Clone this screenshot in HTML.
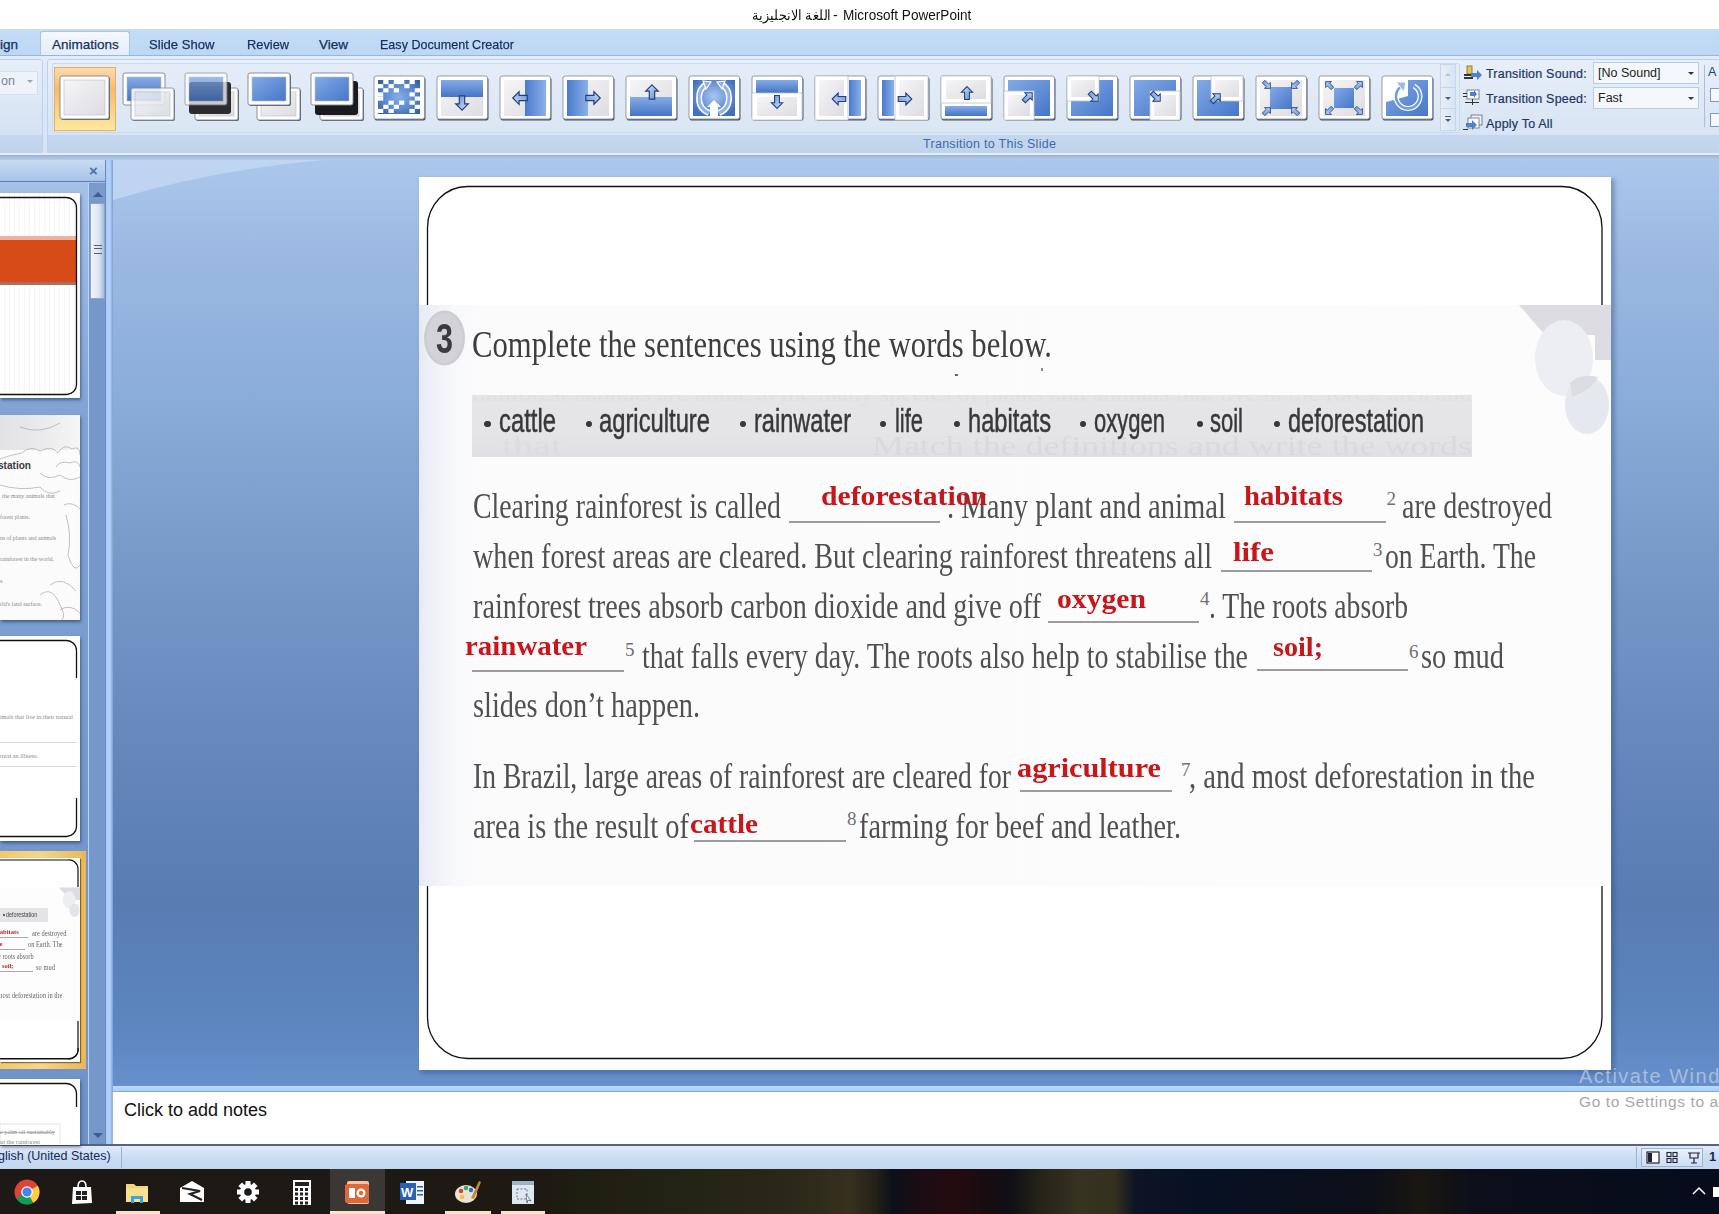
<!DOCTYPE html><html><head><meta charset="utf-8"><style>
html,body{margin:0;padding:0;width:1719px;height:1214px;overflow:hidden;position:relative;background:#fff;font-family:"Liberation Sans",sans-serif}
.a{position:absolute}
.t{position:absolute;white-space:pre;line-height:normal;transform-origin:0 0}
.tab{position:absolute;top:36.5px;font-size:13.5px;color:#15305e;white-space:pre;-webkit-text-stroke:0.25px #15305e}
</style></head><body>

<!-- title bar -->
<div class="a" style="left:0;top:0;width:1719px;height:29px;background:#fff"></div>
<div class="a" style="left:752px;top:7px;font-size:14px;color:#111;white-space:pre;transform:scaleX(0.92);transform-origin:0 0">اللغة الانجليزية</div><div class="a" style="left:833px;top:7px;font-size:14px;color:#111;white-space:pre">-</div><div class="a" style="left:843px;top:7px;font-size:14px;color:#111;white-space:pre;transform:scaleX(0.97);transform-origin:0 0">Microsoft PowerPoint</div>
<!-- tab strip -->
<div class="a" style="left:0;top:29px;width:1719px;height:27px;background:linear-gradient(#c4dcf7,#bcd6f4)"></div>
<div class="a" style="left:40px;top:31px;width:88px;height:25px;background:linear-gradient(#f5f8fd,#e3ecf8);border:1px solid #a9c5e9;border-bottom:none;border-radius:3px 3px 0 0"></div>
<div class="a" style="left:41px;top:55px;width:88px;height:2px;background:#e4edf8"></div>
<div class="tab" style="left:0">ign</div>
<div class="tab" style="left:52px">Animations</div>
<div class="tab" style="left:149px;transform:scaleX(0.97);transform-origin:0 0">Slide Show</div>
<div class="tab" style="left:247px;transform:scaleX(0.95);transform-origin:0 0">Review</div>
<div class="tab" style="left:319px">View</div>
<div class="tab" style="left:380px;transform:scaleX(0.93);transform-origin:0 0">Easy Document Creator</div>
<!-- ribbon body -->
<div class="a" style="left:0;top:55px;width:1719px;height:1px;background:#94b6e4"></div>
<div class="a" style="left:0;top:56px;width:1719px;height:100px;background:linear-gradient(#e2ebf7,#d6e3f4)"></div>
<div class="a" style="left:-6px;top:59px;width:47px;height:93px;border:1px solid #bcd2ec;border-radius:3px;background:linear-gradient(#e6eef9 0%,#d5e2f3 80%,#c4d7ee 81%,#bfd3ec 100%)"></div>
<div class="a" style="left:0;top:71px;width:37px;height:22px;background:#eef3fa;border:1px solid #d3e0f0;border-left:none"></div>
<div class="a" style="left:1px;top:74px;font-size:12.5px;color:#7a8494">on</div>
<div class="a" style="left:27px;top:80px;width:0;height:0;border-left:3px solid transparent;border-right:3px solid transparent;border-top:3px solid #9aa6b6"></div>
<div class="a" style="left:47px;top:59px;width:1680px;height:93px;border:1px solid #bcd2ec;border-radius:3px;background:linear-gradient(#e7eff9 0%,#d8e4f4 80%,#c4d7ee 81%,#bfd3ec 100%)"></div>
<div class="a" style="left:52px;top:63px;width:1406px;height:68px;border:1px solid #c9dbf0;border-radius:2px;background:linear-gradient(#e4edf8,#dbe6f4)"></div>
<div class="a" style="left:923px;top:137px;font-size:12.5px;color:#3e6aa8;white-space:pre;letter-spacing:0.28px">Transition to This Slide</div>
<div class="a" style="left:0;top:153px;width:1719px;height:2px;background:#e4eefa"></div><div class="a" style="left:0;top:155px;width:1719px;height:5px;background:linear-gradient(#97b3d8,#b6cce9)"></div>
<!-- workspace -->
<div class="a" style="left:0;top:160px;width:1719px;height:926px;background:linear-gradient(180deg,#abc7eb 0%,#9bb9e2 10%,#8badd9 25%,#7598c8 45%,#6486bb 65%,#587db3 80%,#5c84bd 92%,#6690cc 100%)"></div>
<svg class="a" style="left:113px;top:160px" width="400" height="60"><path d="M0,0 L210,0 Q100,10 0,40 Z" fill="#c6daf3" opacity="0.75"/></svg>
<!-- left pane -->
<div class="a" style="left:0;top:160px;width:106px;height:984px;background:linear-gradient(180deg,#a9c4ea 0%,#82a4d5 25%,#7397cc 70%,#6e93ca 100%)"></div>
<div class="a" style="left:0;top:160px;width:105px;height:21px;background:linear-gradient(#cadcf3,#a8c2e7);border-bottom:1px solid #5f83b9"></div>
<div class="a" style="left:89px;top:162px;font-size:15px;font-weight:bold;color:#4a6fa5">×</div>
<div class="a" style="left:105px;top:160px;width:8px;height:986px;background:linear-gradient(90deg,#6a8cc0 0px,#6a8cc0 1px,#a9cbf4 1px,#b4d2f6 5px,#8db0e0 7px,#7d9fd3 8px)"></div>
<!-- scrollbar -->
<div class="a" style="left:88px;top:183px;width:1px;height:961px;background:#b9d5f6"></div><div class="a" style="left:89px;top:183px;width:16px;height:961px;background:#7597c9"></div>
<div class="a" style="left:90px;top:184px;width:15px;height:17px;background:#7b99c9"></div>
<div class="a" style="left:93px;top:192px;width:0;height:0;border-left:5px solid transparent;border-right:5px solid transparent;border-bottom:5px solid #3b5f95"></div>
<div class="a" style="left:90px;top:203px;width:15px;height:96px;background:linear-gradient(90deg,#f1f5fb,#dbe5f2 60%,#a9bcd8);border:1px solid #8aa4cc;box-sizing:border-box"></div>
<div class="a" style="left:94px;top:245px;width:8px;height:7px;border-top:1px solid #555e6e;border-bottom:1px solid #555e6e"></div>
<div class="a" style="left:94px;top:248px;width:8px;height:1px;background:#555e6e"></div>
<div class="a" style="left:93px;top:1133px;width:0;height:0;border-left:5px solid transparent;border-right:5px solid transparent;border-top:5px solid #3b5f95"></div>
<!-- notes -->
<div class="a" style="left:113px;top:1086px;width:1606px;height:6px;background:linear-gradient(#bcdcfc,#a9cbf2)"></div><div class="a" style="left:113px;top:1091px;width:1606px;height:1px;background:#86a8d6"></div>
<div class="a" style="left:112px;top:1092px;width:1607px;height:52px;background:#fff;border-left:1px solid #9ab6dc"></div>
<div class="a" style="left:124px;top:1100px;font-size:18px;color:#111;white-space:pre">Click to add notes</div>
<div class="a" style="left:0;top:1144px;width:1719px;height:2px;background:#56657c"></div>
<!-- status bar -->
<div class="a" style="left:0;top:1146px;width:1719px;height:23px;background:linear-gradient(#e0ebf9,#cadcf2 50%,#c3d7f0)"></div>
<div class="a" style="left:121px;top:1147px;width:1px;height:21px;background:#99b3d6"></div>
<div class="a" style="left:-2px;top:1149px;font-size:12.5px;color:#15295a;white-space:pre">glish (United States)</div>
<!-- taskbar -->
<div class="a" style="left:0;top:1169px;width:1719px;height:45px;background:linear-gradient(90deg,#1c1916 0.00%,#1e1913 31.41%,#1e1d11 33.16%,#242415 40.72%,#2a2818 45.96%,#36301e 49.45%,#232119 50.96%,#0c1018 51.89%,#1b0c14 53.52%,#240c10 55.26%,#180c10 57.30%,#101016 58.76%,#242318 60.50%,#383321 62.83%,#34301e 64.86%,#0e1424 66.03%,#081024 69.81%,#0c0f18 79.70%,#1a1711 82.61%,#0c0f1a 85.51%,#060c1c 100.00%)"></div>
<div class="a" style="left:330px;top:1169px;width:55px;height:45px;background:#3a3734"></div>
<div class="a" style="left:116px;top:1211px;width:44px;height:3px;background:#f2e9c4"></div>
<div class="a" style="left:330px;top:1211px;width:55px;height:3px;background:#f2e9c4"></div>
<div class="a" style="left:445px;top:1211px;width:46px;height:3px;background:#f2e9c4"></div>
<div class="a" style="left:501px;top:1211px;width:44px;height:3px;background:#f2e9c4"></div>
<div class="a" style="left:421px;top:179px;width:1194px;height:895px;background:rgba(40,70,120,0.35);filter:blur(2px)"></div><div class="a" style="left:419px;top:177px;width:1192px;height:893px;background:#fff"></div><svg class="a" style="left:419px;top:177px" width="1192" height="893"><rect x="8.5" y="9.5" width="1174.5" height="872" rx="40" ry="41" fill="none" stroke="#111" stroke-width="1.3"/></svg><div class="a" style="left:419px;top:305px;width:1192px;height:581px;background:linear-gradient(90deg,#e6eaf5 0px,#eef0f8 12px,#f7f8fb 35px,#fbfbfc 60px,#fcfcfc 100%)"></div><svg class="a" style="left:1500px;top:305px" width="111" height="140"><polygon points="19,0 111,0 111,55 95,55 95,30 45,30" fill="#dcdce2"/><ellipse cx="64" cy="53" rx="29" ry="38" fill="#eceef4"/><ellipse cx="87" cy="100" rx="22" ry="29" fill="#e6e8ef"/><path d="M70,78 Q80,68 98,72 Q92,85 72,92 Z" fill="#dcdde3"/></svg><svg class="a" style="left:422px;top:308px" width="46" height="60"><ellipse cx="22.5" cy="30" rx="20.5" ry="27.5" fill="#cdcdd1"/><ellipse cx="22.5" cy="30" rx="18" ry="25" fill="#d3d3d7"/></svg><div class="t" style="left:436.0px;top:314.99px;font-size:42px;font-family:'Liberation Sans', sans-serif;font-weight:bold;color:#3b3a40;transform:scaleX(0.7278);">3</div><div class="t" style="left:472.0px;top:322.53px;font-size:37px;font-family:'Liberation Serif', serif;color:#3e3e40;transform:scaleX(0.8292);">Complete the sentences using the words below.</div><div class="a" style="left:472px;top:395px;width:1000px;height:62px;background:#e5e5e8"></div><div class="a" style="left:472px;top:433px;width:1000px;height:24px;background:linear-gradient(#e5e5e8,#e0e0e4)"></div><div class="a" style="left:472px;top:395px;width:1000px;height:62px;overflow:hidden;filter:blur(0.7px)"><div class="t" style="left:0.0px;top:-15.38px;font-size:24px;font-family:'Liberation Serif', serif;color:#e0e0e3;transform:scaleX(1.0374);">rainforest habitats are home to the many species of plants and animals that live in the forest area and</div><div class="t" style="left:400.0px;top:35.05px;font-size:28px;font-family:'Liberation Serif', serif;color:#dadadd;transform:scaleX(1.2818);">Match the definitions and write the words</div><div class="t" style="left:30.0px;top:35.05px;font-size:28px;font-family:'Liberation Serif', serif;color:#dddde0;transform:scaleX(1.4291);">that</div></div><div class="a" style="left:955px;top:374px;width:3px;height:2px;background:#666"></div><div class="a" style="left:1041px;top:368px;width:2px;height:3px;background:#888"></div><div class="a" style="left:484.3px;top:420.5px;width:6.4px;height:6.4px;border-radius:50%;background:#38383c"></div><div class="a" style="left:585.8px;top:420.5px;width:6.4px;height:6.4px;border-radius:50%;background:#38383c"></div><div class="a" style="left:739.8px;top:420.5px;width:6.4px;height:6.4px;border-radius:50%;background:#38383c"></div><div class="a" style="left:879.8px;top:420.5px;width:6.4px;height:6.4px;border-radius:50%;background:#38383c"></div><div class="a" style="left:953.8px;top:420.5px;width:6.4px;height:6.4px;border-radius:50%;background:#38383c"></div><div class="a" style="left:1079.8px;top:420.5px;width:6.4px;height:6.4px;border-radius:50%;background:#38383c"></div><div class="a" style="left:1196.8px;top:420.5px;width:6.4px;height:6.4px;border-radius:50%;background:#38383c"></div><div class="a" style="left:1273.8px;top:420.5px;width:6.4px;height:6.4px;border-radius:50%;background:#38383c"></div><div class="t" style="left:499.0px;top:402.13px;font-size:33px;font-family:'Liberation Sans', sans-serif;color:#38383c;transform:scaleX(0.7225);-webkit-text-stroke:0.5px #38383c;">cattle</div><div class="t" style="left:599.0px;top:402.13px;font-size:33px;font-family:'Liberation Sans', sans-serif;color:#38383c;transform:scaleX(0.7203);-webkit-text-stroke:0.5px #38383c;">agriculture</div><div class="t" style="left:754.0px;top:402.13px;font-size:33px;font-family:'Liberation Sans', sans-serif;color:#38383c;transform:scaleX(0.7146);-webkit-text-stroke:0.5px #38383c;">rainwater</div><div class="t" style="left:895.0px;top:402.13px;font-size:33px;font-family:'Liberation Sans', sans-serif;color:#38383c;transform:scaleX(0.6637);-webkit-text-stroke:0.5px #38383c;">life</div><div class="t" style="left:968.0px;top:402.13px;font-size:33px;font-family:'Liberation Sans', sans-serif;color:#38383c;transform:scaleX(0.7179);-webkit-text-stroke:0.5px #38383c;">habitats</div><div class="t" style="left:1094.0px;top:402.13px;font-size:33px;font-family:'Liberation Sans', sans-serif;color:#38383c;transform:scaleX(0.6671);-webkit-text-stroke:0.5px #38383c;">oxygen</div><div class="t" style="left:1210.0px;top:402.13px;font-size:33px;font-family:'Liberation Sans', sans-serif;color:#38383c;transform:scaleX(0.6665);-webkit-text-stroke:0.5px #38383c;">soil</div><div class="t" style="left:1288.0px;top:402.13px;font-size:33px;font-family:'Liberation Sans', sans-serif;color:#38383c;transform:scaleX(0.7126);-webkit-text-stroke:0.5px #38383c;">deforestation</div><div class="t" style="left:473.0px;top:484.92px;font-size:36px;font-family:'Liberation Serif', serif;color:#505052;transform:scaleX(0.7722);">Clearing rainforest is called</div><div class="t" style="left:947.0px;top:484.92px;font-size:36px;font-family:'Liberation Serif', serif;color:#505052;transform:scaleX(0.7950);">. Many plant and animal</div><div class="t" style="left:1402.0px;top:484.92px;font-size:36px;font-family:'Liberation Serif', serif;color:#505052;transform:scaleX(0.7775);">are destroyed</div><div class="t" style="left:473.0px;top:534.92px;font-size:36px;font-family:'Liberation Serif', serif;color:#505052;transform:scaleX(0.7832);">when forest areas are cleared. But clearing rainforest threatens all</div><div class="t" style="left:1385.0px;top:534.92px;font-size:36px;font-family:'Liberation Serif', serif;color:#505052;transform:scaleX(0.7694);">on Earth. The</div><div class="t" style="left:473.0px;top:584.92px;font-size:36px;font-family:'Liberation Serif', serif;color:#505052;transform:scaleX(0.7823);">rainforest trees absorb carbon dioxide and give off</div><div class="t" style="left:1209.0px;top:584.92px;font-size:36px;font-family:'Liberation Serif', serif;color:#505052;transform:scaleX(0.7675);">. The roots absorb</div><div class="t" style="left:642.0px;top:634.92px;font-size:36px;font-family:'Liberation Serif', serif;color:#505052;transform:scaleX(0.7751);">that falls every day. The roots also help to stabilise the</div><div class="t" style="left:1421.0px;top:634.92px;font-size:36px;font-family:'Liberation Serif', serif;color:#505052;transform:scaleX(0.7904);">so mud</div><div class="t" style="left:473.0px;top:683.92px;font-size:36px;font-family:'Liberation Serif', serif;color:#505052;transform:scaleX(0.7873);">slides don’t happen.</div><div class="t" style="left:473.0px;top:754.92px;font-size:36px;font-family:'Liberation Serif', serif;color:#505052;transform:scaleX(0.7664);">In Brazil, large areas of rainforest are cleared for</div><div class="t" style="left:1189.0px;top:754.92px;font-size:36px;font-family:'Liberation Serif', serif;color:#505052;transform:scaleX(0.7937);">, and most deforestation in the</div><div class="t" style="left:473.0px;top:804.92px;font-size:36px;font-family:'Liberation Serif', serif;color:#505052;transform:scaleX(0.7886);">area is the result of</div><div class="t" style="left:859.0px;top:804.92px;font-size:36px;font-family:'Liberation Serif', serif;color:#505052;transform:scaleX(0.7838);">farming for beef and leather.</div><div class="a" style="left:789px;top:521px;width:151px;height:1.6px;background:#9c9c9e"></div><div class="a" style="left:1234px;top:521px;width:152px;height:1.6px;background:#9c9c9e"></div><div class="a" style="left:1221px;top:570px;width:151px;height:1.6px;background:#9c9c9e"></div><div class="a" style="left:1048px;top:621px;width:151px;height:1.6px;background:#9c9c9e"></div><div class="a" style="left:472px;top:670px;width:152px;height:1.6px;background:#9c9c9e"></div><div class="a" style="left:1257px;top:669px;width:151px;height:1.6px;background:#9c9c9e"></div><div class="a" style="left:1020px;top:790px;width:152px;height:1.6px;background:#9c9c9e"></div><div class="a" style="left:694px;top:840px;width:152px;height:1.6px;background:#9c9c9e"></div><div class="t" style="left:1386.5px;top:488.07px;font-size:19px;font-family:'Liberation Serif', serif;color:#707070;transform:scaleX(1.0000);">2</div><div class="t" style="left:1373.0px;top:538.57px;font-size:19px;font-family:'Liberation Serif', serif;color:#707070;transform:scaleX(1.0000);">3</div><div class="t" style="left:1200.0px;top:588.07px;font-size:19px;font-family:'Liberation Serif', serif;color:#707070;transform:scaleX(1.0000);">4</div><div class="t" style="left:625.0px;top:638.57px;font-size:19px;font-family:'Liberation Serif', serif;color:#707070;transform:scaleX(1.0000);">5</div><div class="t" style="left:1409.0px;top:641.07px;font-size:19px;font-family:'Liberation Serif', serif;color:#707070;transform:scaleX(1.0000);">6</div><div class="t" style="left:1181.0px;top:759.07px;font-size:19px;font-family:'Liberation Serif', serif;color:#707070;transform:scaleX(1.0000);">7</div><div class="t" style="left:847.0px;top:807.57px;font-size:19px;font-family:'Liberation Serif', serif;color:#707070;transform:scaleX(1.0000);">8</div><div class="t" style="left:821.0px;top:480.05px;font-size:28px;font-family:'Liberation Serif', serif;font-weight:bold;color:#c8161a;transform:scaleX(1.0602);">deforestation</div><div class="t" style="left:1244.0px;top:480.05px;font-size:28px;font-family:'Liberation Serif', serif;font-weight:bold;color:#c8161a;transform:scaleX(1.0261);">habitats</div><div class="t" style="left:1233.0px;top:535.55px;font-size:28px;font-family:'Liberation Serif', serif;font-weight:bold;color:#c8161a;transform:scaleX(1.0988);">life</div><div class="t" style="left:1057.0px;top:582.55px;font-size:28px;font-family:'Liberation Serif', serif;font-weight:bold;color:#c8161a;transform:scaleX(1.0595);">oxygen</div><div class="t" style="left:465.0px;top:630.05px;font-size:28px;font-family:'Liberation Serif', serif;font-weight:bold;color:#c8161a;transform:scaleX(1.0324);">rainwater</div><div class="t" style="left:1273.0px;top:631.05px;font-size:28px;font-family:'Liberation Serif', serif;font-weight:bold;color:#c8161a;transform:scaleX(1.0044);">soil;</div><div class="t" style="left:1017.0px;top:751.55px;font-size:28px;font-family:'Liberation Serif', serif;font-weight:bold;color:#c8161a;transform:scaleX(1.0808);">agriculture</div><div class="t" style="left:690.0px;top:807.85px;font-size:28px;font-family:'Liberation Serif', serif;font-weight:bold;color:#c8161a;transform:scaleX(1.0416);">cattle</div><div class="a" style="left:1579px;top:1065px;font-size:20px;color:rgba(200,210,225,0.7);white-space:pre;letter-spacing:1.5px">Activate Windows</div><div class="a" style="left:1579px;top:1093px;font-size:15.5px;color:#a8a8a8;white-space:pre;letter-spacing:0.6px">Go to Settings to activate Windows.</div><svg width="0" height="0" style="position:absolute"><defs>
<linearGradient id="bl" x1="0" y1="0" x2="1" y2="1"><stop offset="0" stop-color="#82aae6"/><stop offset="1" stop-color="#4676c8"/></linearGradient>
<linearGradient id="blv" x1="0" y1="0" x2="0" y2="1"><stop offset="0" stop-color="#86ace6"/><stop offset="1" stop-color="#4474c6"/></linearGradient>
<linearGradient id="blh" x1="0" y1="0" x2="1" y2="0"><stop offset="0" stop-color="#4a7acb"/><stop offset="1" stop-color="#8ab0e8"/></linearGradient>
<linearGradient id="gr" x1="0" y1="0" x2="1" y2="1"><stop offset="0" stop-color="#f6f6f8"/><stop offset="1" stop-color="#dcdce2"/></linearGradient>
<radialGradient id="blr" cx="0.5" cy="0.45" r="0.6"><stop offset="0" stop-color="#a9c6f0"/><stop offset="1" stop-color="#4170c2"/></radialGradient>
<linearGradient id="arr" x1="0" y1="0" x2="1" y2="1"><stop offset="0" stop-color="#d3e3fa"/><stop offset="1" stop-color="#5f8cd8"/></linearGradient>
<linearGradient id="hl" x1="0" y1="0" x2="0" y2="1"><stop offset="0" stop-color="#fcdcae"/><stop offset="0.35" stop-color="#f9b970"/><stop offset="0.55" stop-color="#fbc978"/><stop offset="1" stop-color="#fde9a0"/></linearGradient>
<radialGradient id="blr2" cx="0.5" cy="0.5" r="0.65"><stop offset="0" stop-color="#86aee8"/><stop offset="0.6" stop-color="#5a86cc"/><stop offset="1" stop-color="#35609e"/></radialGradient><linearGradient id="dk" x1="0" y1="0" x2="0" y2="1"><stop offset="0" stop-color="#5a7bb0"/><stop offset="1" stop-color="#3a3a3e"/></linearGradient>
</defs></svg><svg class="a" style="left:54px;top:67px" width="62" height="64"><rect x="0.5" y="0.5" width="61" height="63" fill="url(#hl)" stroke="#e8b060" stroke-width="1"/></svg><svg class="a" style="left:59px;top:75px;overflow:visible" width="54" height="48"><rect x="2" y="2" width="49" height="43" rx="2" fill="#56606e"/><rect x="1" y="1" width="49" height="43" rx="2" fill="#fff" stroke="#7d8592" stroke-width="0.9"/><rect x="5" y="5" width="41" height="35" fill="url(#gr)" stroke="#b8bcc4" stroke-width="0.6"/></svg><svg class="a" style="left:122px;top:75px;overflow:visible" width="54" height="48"><rect x="1" y="-2" width="42" height="32" rx="2" fill="#fff" stroke="#7d8592" stroke-width="0.9"/><rect x="5" y="2" width="34" height="24" fill="url(#blv)" stroke="#b8bcc4" stroke-width="0.6"/><g opacity="0.85"><rect x="10" y="14" width="43" height="32" rx="2" fill="#56606e"/><rect x="9" y="13" width="43" height="32" rx="2" fill="#fff" stroke="#7d8592" stroke-width="0.9"/><rect x="13" y="17" width="35" height="24" fill="url(#gr)" stroke="#b8bcc4" stroke-width="0.6"/></g></svg><svg class="a" style="left:185px;top:75px;overflow:visible" width="54" height="48"><rect x="11" y="14" width="43" height="32" rx="2" fill="#56606e"/><rect x="10" y="13" width="43" height="32" rx="2" fill="#fff" stroke="#7d8592" stroke-width="0.9"/><rect x="14" y="17" width="35" height="24" fill="url(#gr)" stroke="#b8bcc4" stroke-width="0.6"/><rect x="4" y="7" width="42" height="32" rx="3" fill="#2c2c30"/><g opacity="0.75"><rect x="0" y="-2" width="42" height="32" rx="2" fill="#fff" stroke="#7d8592" stroke-width="0.9"/><rect x="4" y="2" width="34" height="24" fill="url(#blv)" stroke="#b8bcc4" stroke-width="0.6"/></g></svg><svg class="a" style="left:248px;top:75px;overflow:visible" width="54" height="48"><rect x="10" y="14" width="43" height="32" rx="2" fill="#56606e"/><rect x="9" y="13" width="43" height="32" rx="2" fill="#fff" stroke="#7d8592" stroke-width="0.9"/><rect x="13" y="17" width="35" height="24" fill="url(#gr)" stroke="#b8bcc4" stroke-width="0.6"/><rect x="1" y="-1" width="42" height="32" rx="2" fill="#56606e"/><rect x="0" y="-2" width="42" height="32" rx="2" fill="#fff" stroke="#7d8592" stroke-width="0.9"/><rect x="4" y="2" width="34" height="24" fill="url(#bl)" stroke="#b8bcc4" stroke-width="0.6"/></svg><svg class="a" style="left:311px;top:75px;overflow:visible" width="54" height="48"><rect x="10" y="14" width="43" height="32" rx="2" fill="#56606e"/><rect x="9" y="13" width="43" height="32" rx="2" fill="#fff" stroke="#7d8592" stroke-width="0.9"/><rect x="13" y="17" width="35" height="24" fill="url(#gr)" stroke="#b8bcc4" stroke-width="0.6"/><rect x="4" y="6" width="43" height="34" rx="3" fill="#1b1b1d"/><rect x="0" y="-2" width="42" height="32" rx="2" fill="#fff" stroke="#7d8592" stroke-width="0.9"/><rect x="4" y="2" width="34" height="24" fill="url(#bl)" stroke="#b8bcc4" stroke-width="0.6"/></svg><svg class="a" style="left:374px;top:76px;overflow:visible" width="52" height="46"><rect x="0.5" y="1.5" width="51" height="43" rx="2" fill="#4a5566"/><rect x="0" y="0" width="50.5" height="43" rx="2" fill="#fff" stroke="#8a929e" stroke-width="0.9"/><rect x="4" y="4" width="42" height="34" fill="url(#blr2)"/><rect x="9.25" y="4.00" width="5.25" height="4.12" fill="#fff"/><rect x="19.75" y="4.00" width="5.25" height="4.12" fill="#fff"/><rect x="25.00" y="4.00" width="5.25" height="4.12" fill="#fff"/><rect x="35.50" y="4.00" width="5.25" height="4.12" fill="#fff"/><rect x="4.00" y="8.12" width="5.25" height="4.12" fill="#fff"/><rect x="14.50" y="8.12" width="5.25" height="4.12" fill="#fff"/><rect x="30.25" y="8.12" width="5.25" height="4.12" fill="#fff"/><rect x="9.25" y="12.25" width="5.25" height="4.12" fill="#fff"/><rect x="19.75" y="12.25" width="5.25" height="4.12" fill="#fff"/><rect x="40.75" y="12.25" width="5.25" height="4.12" fill="#fff"/><rect x="4.00" y="16.38" width="5.25" height="4.12" fill="#fff"/><rect x="35.50" y="16.38" width="5.25" height="4.12" fill="#fff"/><rect x="4.00" y="20.50" width="5.25" height="4.12" fill="#fff"/><rect x="40.75" y="20.50" width="5.25" height="4.12" fill="#fff"/><rect x="14.50" y="24.62" width="5.25" height="4.12" fill="#fff"/><rect x="25.00" y="24.62" width="5.25" height="4.12" fill="#fff"/><rect x="35.50" y="24.62" width="5.25" height="4.12" fill="#fff"/><rect x="9.25" y="28.75" width="5.25" height="4.12" fill="#fff"/><rect x="19.75" y="28.75" width="5.25" height="4.12" fill="#fff"/><rect x="40.75" y="28.75" width="5.25" height="4.12" fill="#fff"/><rect x="4.00" y="32.88" width="5.25" height="4.12" fill="#fff"/><rect x="14.50" y="32.88" width="5.25" height="4.12" fill="#fff"/><rect x="35.50" y="32.88" width="5.25" height="4.12" fill="#fff"/></svg><svg class="a" style="left:437px;top:76px;overflow:visible" width="52" height="46"><rect x="0.5" y="1.5" width="51" height="43" rx="2" fill="#4a5566"/><rect x="0" y="0" width="50.5" height="43" rx="2" fill="#fff" stroke="#8a929e" stroke-width="0.9"/><rect x="4" y="4" width="42" height="36" fill="url(#gr)"/><rect x="4" y="4" width="42" height="17" fill="url(#blv)"/><path d="M0,-8 L7,-1 L3,-1 L3,8 L-3,8 L-3,-1 L-7,-1 Z" transform="translate(25,27) rotate(180) scale(0.9)" fill="url(#arr)" stroke="#203f7a" stroke-width="1.3"/></svg><svg class="a" style="left:500px;top:76px;overflow:visible" width="52" height="46"><rect x="0.5" y="1.5" width="51" height="43" rx="2" fill="#4a5566"/><rect x="0" y="0" width="50.5" height="43" rx="2" fill="#fff" stroke="#8a929e" stroke-width="0.9"/><rect x="4" y="4" width="42" height="36" fill="url(#gr)"/><rect x="25" y="4" width="21" height="36" fill="url(#blh)"/><path d="M0,-8 L7,-1 L3,-1 L3,8 L-3,8 L-3,-1 L-7,-1 Z" transform="translate(20,22) rotate(270) scale(0.9)" fill="url(#arr)" stroke="#203f7a" stroke-width="1.3"/></svg><svg class="a" style="left:563px;top:76px;overflow:visible" width="52" height="46"><rect x="0.5" y="1.5" width="51" height="43" rx="2" fill="#4a5566"/><rect x="0" y="0" width="50.5" height="43" rx="2" fill="#fff" stroke="#8a929e" stroke-width="0.9"/><rect x="4" y="4" width="42" height="36" fill="url(#gr)"/><rect x="4" y="4" width="21" height="36" fill="url(#blh)"/><path d="M0,-8 L7,-1 L3,-1 L3,8 L-3,8 L-3,-1 L-7,-1 Z" transform="translate(30,22) rotate(90) scale(0.9)" fill="url(#arr)" stroke="#203f7a" stroke-width="1.3"/></svg><svg class="a" style="left:626px;top:76px;overflow:visible" width="52" height="46"><rect x="0.5" y="1.5" width="51" height="43" rx="2" fill="#4a5566"/><rect x="0" y="0" width="50.5" height="43" rx="2" fill="#fff" stroke="#8a929e" stroke-width="0.9"/><rect x="4" y="4" width="42" height="36" fill="url(#gr)"/><rect x="4" y="21" width="42" height="19" fill="url(#blv)"/><path d="M0,-8 L7,-1 L3,-1 L3,8 L-3,8 L-3,-1 L-7,-1 Z" transform="translate(26,16) rotate(0) scale(0.9)" fill="url(#arr)" stroke="#203f7a" stroke-width="1.3"/></svg><svg class="a" style="left:689px;top:76px;overflow:visible" width="52" height="46"><rect x="0.5" y="1.5" width="51" height="43" rx="2" fill="#4a5566"/><rect x="0" y="0" width="50.5" height="43" rx="2" fill="#fff" stroke="#8a929e" stroke-width="0.9"/><rect x="4" y="4" width="42" height="36" fill="url(#blr)"/><path d="M20,37 Q10,33 10,22 Q10,12 18,8" fill="none" stroke="#fff" stroke-width="6"/><path d="M30,37 Q40,33 40,22 Q40,12 32,8" fill="none" stroke="#fff" stroke-width="6"/><path d="M20,37 Q10,33 10,22 Q10,12 18,8" fill="none" stroke="#8fb2e8" stroke-width="3"/><path d="M30,37 Q40,33 40,22 Q40,12 32,8" fill="none" stroke="#8fb2e8" stroke-width="3"/><path d="M14,5 L22,6 L17,13 Z" fill="#8fb2e8" stroke="#fff" stroke-width="1.2"/><path d="M36,5 L28,6 L33,13 Z" fill="#8fb2e8" stroke="#fff" stroke-width="1.2"/><path d="M25,24 L32,31 L29,31 L29,40 L21,40 L21,31 L18,31 Z" fill="#fff"/></svg><svg class="a" style="left:752px;top:76px;overflow:visible" width="52" height="46"><rect x="0.5" y="1.5" width="51" height="43" rx="2" fill="#4a5566"/><rect x="0" y="0" width="50.5" height="43" rx="2" fill="#fff" stroke="#8a929e" stroke-width="0.9"/><rect x="4" y="4" width="42" height="13" fill="url(#blv)"/><rect x="0" y="17" width="50" height="27" fill="#fff" stroke="#b8c0cc" stroke-width="0.8"/><rect x="5" y="21" width="40" height="19" fill="url(#gr)"/><path d="M0,-8 L7,-1 L3,-1 L3,8 L-3,8 L-3,-1 L-7,-1 Z" transform="translate(25,26) rotate(180) scale(0.8)" fill="url(#arr)" stroke="#203f7a" stroke-width="1.3"/></svg><svg class="a" style="left:815px;top:76px;overflow:visible" width="52" height="46"><rect x="0.5" y="1.5" width="51" height="43" rx="2" fill="#4a5566"/><rect x="0" y="0" width="50.5" height="43" rx="2" fill="#fff" stroke="#8a929e" stroke-width="0.9"/><rect x="34" y="4" width="12" height="36" fill="url(#blh)"/><rect x="0" y="0" width="33" height="44" fill="#fff" stroke="#b8c0cc" stroke-width="0.8"/><rect x="4" y="4" width="25" height="36" fill="url(#gr)"/><path d="M0,-8 L7,-1 L3,-1 L3,8 L-3,8 L-3,-1 L-7,-1 Z" transform="translate(24,23) rotate(270) scale(0.85)" fill="url(#arr)" stroke="#203f7a" stroke-width="1.3"/></svg><svg class="a" style="left:878px;top:76px;overflow:visible" width="52" height="46"><rect x="0.5" y="1.5" width="51" height="43" rx="2" fill="#4a5566"/><rect x="0" y="0" width="50.5" height="43" rx="2" fill="#fff" stroke="#8a929e" stroke-width="0.9"/><rect x="4" y="4" width="12" height="36" fill="url(#blh)"/><rect x="17" y="0" width="33" height="44" fill="#fff" stroke="#b8c0cc" stroke-width="0.8"/><rect x="21" y="4" width="25" height="36" fill="url(#gr)"/><path d="M0,-8 L7,-1 L3,-1 L3,8 L-3,8 L-3,-1 L-7,-1 Z" transform="translate(27,23) rotate(90) scale(0.85)" fill="url(#arr)" stroke="#203f7a" stroke-width="1.3"/></svg><svg class="a" style="left:941px;top:76px;overflow:visible" width="52" height="46"><rect x="0.5" y="1.5" width="51" height="43" rx="2" fill="#4a5566"/><rect x="0" y="0" width="50.5" height="43" rx="2" fill="#fff" stroke="#8a929e" stroke-width="0.9"/><rect x="4" y="30" width="42" height="10" fill="url(#blv)"/><rect x="0" y="0" width="50" height="27" fill="#fff" stroke="#b8c0cc" stroke-width="0.8"/><rect x="5" y="4" width="40" height="19" fill="url(#gr)"/><path d="M0,-8 L7,-1 L3,-1 L3,8 L-3,8 L-3,-1 L-7,-1 Z" transform="translate(26,17) rotate(0) scale(0.8)" fill="url(#arr)" stroke="#203f7a" stroke-width="1.3"/></svg><svg class="a" style="left:1004px;top:76px;overflow:visible" width="52" height="46"><rect x="0.5" y="1.5" width="51" height="43" rx="2" fill="#4a5566"/><rect x="0" y="0" width="50.5" height="43" rx="2" fill="#fff" stroke="#8a929e" stroke-width="0.9"/><rect x="4" y="4" width="42" height="36" fill="url(#bl)"/><rect x="0" y="15" width="30" height="29" fill="#fff" stroke="#b8c0cc" stroke-width="0.8"/><rect x="4" y="19" width="22" height="21" fill="url(#gr)"/><path d="M0,-8 L7,-1 L3,-1 L3,8 L-3,8 L-3,-1 L-7,-1 Z" transform="translate(24,21) rotate(45) scale(0.75)" fill="url(#arr)" stroke="#203f7a" stroke-width="1.3"/></svg><svg class="a" style="left:1067px;top:76px;overflow:visible" width="52" height="46"><rect x="0.5" y="1.5" width="51" height="43" rx="2" fill="#4a5566"/><rect x="0" y="0" width="50.5" height="43" rx="2" fill="#fff" stroke="#8a929e" stroke-width="0.9"/><rect x="4" y="4" width="42" height="36" fill="url(#bl)"/><rect x="0" y="0" width="32" height="25" fill="#fff" stroke="#b8c0cc" stroke-width="0.8"/><rect x="4" y="4" width="24" height="17" fill="url(#gr)"/><path d="M0,-8 L7,-1 L3,-1 L3,8 L-3,8 L-3,-1 L-7,-1 Z" transform="translate(27,21) rotate(135) scale(0.75)" fill="url(#arr)" stroke="#203f7a" stroke-width="1.3"/></svg><svg class="a" style="left:1130px;top:76px;overflow:visible" width="52" height="46"><rect x="0.5" y="1.5" width="51" height="43" rx="2" fill="#4a5566"/><rect x="0" y="0" width="50.5" height="43" rx="2" fill="#fff" stroke="#8a929e" stroke-width="0.9"/><rect x="4" y="4" width="42" height="36" fill="url(#bl)"/><rect x="20" y="15" width="30" height="29" fill="#fff" stroke="#b8c0cc" stroke-width="0.8"/><rect x="24" y="19" width="22" height="21" fill="url(#gr)"/><path d="M0,-8 L7,-1 L3,-1 L3,8 L-3,8 L-3,-1 L-7,-1 Z" transform="translate(26,21) rotate(135) scale(0.75)" fill="url(#arr)" stroke="#203f7a" stroke-width="1.3"/></svg><svg class="a" style="left:1193px;top:76px;overflow:visible" width="52" height="46"><rect x="0.5" y="1.5" width="51" height="43" rx="2" fill="#4a5566"/><rect x="0" y="0" width="50.5" height="43" rx="2" fill="#fff" stroke="#8a929e" stroke-width="0.9"/><rect x="4" y="4" width="42" height="36" fill="url(#bl)"/><rect x="18" y="0" width="32" height="25" fill="#fff" stroke="#b8c0cc" stroke-width="0.8"/><rect x="22" y="4" width="24" height="17" fill="url(#gr)"/><path d="M0,-8 L7,-1 L3,-1 L3,8 L-3,8 L-3,-1 L-7,-1 Z" transform="translate(23,22) rotate(45) scale(0.75)" fill="url(#arr)" stroke="#203f7a" stroke-width="1.3"/></svg><svg class="a" style="left:1256px;top:76px;overflow:visible" width="52" height="46"><rect x="0.5" y="1.5" width="51" height="43" rx="2" fill="#4a5566"/><rect x="0" y="0" width="50.5" height="43" rx="2" fill="#fff" stroke="#8a929e" stroke-width="0.9"/><rect x="4" y="4" width="42" height="36" fill="url(#gr)"/><rect x="14" y="11" width="22" height="22" fill="url(#bl)"/><path d="M0,-8 L7,-1 L3,-1 L3,8 L-3,8 L-3,-1 L-7,-1 Z" transform="translate(11,9) rotate(135) scale(0.6)" fill="url(#arr)" stroke="#203f7a" stroke-width="1.3"/><path d="M0,-8 L7,-1 L3,-1 L3,8 L-3,8 L-3,-1 L-7,-1 Z" transform="translate(39,9) rotate(225) scale(0.6)" fill="url(#arr)" stroke="#203f7a" stroke-width="1.3"/><path d="M0,-8 L7,-1 L3,-1 L3,8 L-3,8 L-3,-1 L-7,-1 Z" transform="translate(11,35) rotate(45) scale(0.6)" fill="url(#arr)" stroke="#203f7a" stroke-width="1.3"/><path d="M0,-8 L7,-1 L3,-1 L3,8 L-3,8 L-3,-1 L-7,-1 Z" transform="translate(39,35) rotate(315) scale(0.6)" fill="url(#arr)" stroke="#203f7a" stroke-width="1.3"/></svg><svg class="a" style="left:1319px;top:76px;overflow:visible" width="52" height="46"><rect x="0.5" y="1.5" width="51" height="43" rx="2" fill="#4a5566"/><rect x="0" y="0" width="50.5" height="43" rx="2" fill="#fff" stroke="#8a929e" stroke-width="0.9"/><rect x="4" y="4" width="42" height="36" fill="url(#gr)"/><rect x="15" y="12" width="20" height="20" fill="url(#bl)"/><path d="M0,-8 L7,-1 L3,-1 L3,8 L-3,8 L-3,-1 L-7,-1 Z" transform="translate(10,9) rotate(315) scale(0.6)" fill="url(#arr)" stroke="#203f7a" stroke-width="1.3"/><path d="M0,-8 L7,-1 L3,-1 L3,8 L-3,8 L-3,-1 L-7,-1 Z" transform="translate(40,9) rotate(45) scale(0.6)" fill="url(#arr)" stroke="#203f7a" stroke-width="1.3"/><path d="M0,-8 L7,-1 L3,-1 L3,8 L-3,8 L-3,-1 L-7,-1 Z" transform="translate(10,35) rotate(225) scale(0.6)" fill="url(#arr)" stroke="#203f7a" stroke-width="1.3"/><path d="M0,-8 L7,-1 L3,-1 L3,8 L-3,8 L-3,-1 L-7,-1 Z" transform="translate(40,35) rotate(135) scale(0.6)" fill="url(#arr)" stroke="#203f7a" stroke-width="1.3"/></svg><svg class="a" style="left:1382px;top:76px;overflow:visible" width="52" height="46"><rect x="0.5" y="1.5" width="51" height="43" rx="2" fill="#4a5566"/><rect x="0" y="0" width="50.5" height="43" rx="2" fill="#fff" stroke="#8a929e" stroke-width="0.9"/><rect x="4" y="4" width="42" height="36" fill="url(#bl)"/><path d="M4,4 L26,4 L26,20 L4,26 Z" fill="#fff"/><path d="M20,10 A12,12 0 1 0 32,10" fill="none" stroke="#fff" stroke-width="5"/><path d="M20,10 A12,12 0 1 0 32,10" fill="none" stroke="#6f9be0" stroke-width="2.5"/><path d="M14,6 L24,6 L22,16 Z" fill="#9dbbe8" stroke="#fff" stroke-width="1"/></svg><div class="a" style="left:1440px;top:64px;width:16px;height:67px;background:linear-gradient(90deg,#e8eef8,#d9e4f3);border:1px solid #c6d6ec;box-sizing:border-box"></div><div class="a" style="left:1441px;top:87px;width:14px;height:1px;background:#c6d6ec"></div><div class="a" style="left:1441px;top:108px;width:14px;height:1px;background:#c6d6ec"></div><div class="a" style="left:1445px;top:73px;width:0;height:0;border-left:3px solid transparent;border-right:3px solid transparent;border-bottom:3px solid #b9c5d6"></div><div class="a" style="left:1445px;top:97px;width:0;height:0;border-left:3px solid transparent;border-right:3px solid transparent;border-top:3px solid #4d6185"></div><div class="a" style="left:1445px;top:116px;width:6px;height:1px;background:#4d6185"></div><div class="a" style="left:1445px;top:119px;width:0;height:0;border-left:3px solid transparent;border-right:3px solid transparent;border-top:3px solid #4d6185"></div><div class="a" style="left:1486px;top:67px;font-size:12.5px;color:#1d3563;white-space:pre;letter-spacing:0.2px;-webkit-text-stroke:0.2px #1d3563">Transition Sound:</div><div class="a" style="left:1486px;top:92px;font-size:12.5px;color:#1d3563;white-space:pre;letter-spacing:0.2px;-webkit-text-stroke:0.2px #1d3563">Transition Speed:</div><div class="a" style="left:1486px;top:117px;font-size:12.5px;color:#1d3563;white-space:pre;letter-spacing:0.2px;-webkit-text-stroke:0.2px #1d3563">Apply To All</div><div class="a" style="left:1593px;top:62px;width:106px;height:22px;background:#f4f7fc;border:1px solid #b9cce6;box-sizing:border-box"></div><div class="a" style="left:1593px;top:87px;width:106px;height:22px;background:#f4f7fc;border:1px solid #b9cce6;box-sizing:border-box"></div><div class="a" style="left:1598px;top:66px;font-size:12.5px;color:#222;white-space:pre">[No Sound]</div><div class="a" style="left:1598px;top:91px;font-size:12.5px;color:#222;white-space:pre">Fast</div><div class="a" style="left:1688px;top:72px;width:0;height:0;border-left:3.5px solid transparent;border-right:3.5px solid transparent;border-top:3.5px solid #333"></div><div class="a" style="left:1688px;top:97px;width:0;height:0;border-left:3.5px solid transparent;border-right:3.5px solid transparent;border-top:3.5px solid #333"></div><svg class="a" style="left:1463px;top:63px" width="20" height="72"><rect x="4" y="3" width="5" height="8" fill="#e6c64a" stroke="#7a6a2a" stroke-width="0.8"/><rect x="1" y="11" width="9" height="2" fill="#333"/><rect x="1" y="14" width="9" height="2" fill="#333"/><path d="M8,10 L14,10 L14,7 L19,12 L14,17 L14,14 L8,14Z" fill="#4f80cc"/><rect x="4" y="27" width="12" height="9" fill="#fff" stroke="#5a6a80" stroke-width="0.8"/><path d="M7,29 L11,29 L11,27 L14,31 L11,35 L11,33 L7,33Z" fill="#4f80cc"/><rect x="0" y="30" width="4" height="1" fill="#333"/><rect x="0" y="33" width="4" height="1" fill="#333"/><rect x="2" y="39" width="14" height="1" fill="#333"/><rect x="9" y="36" width="1" height="6" fill="#333"/><rect x="8" y="52" width="11" height="10" fill="#eef" stroke="#5a6a80" stroke-width="0.8"/><rect x="5" y="55" width="11" height="10" fill="#fff" stroke="#5a6a80" stroke-width="0.8"/><path d="M3,60 L9,60 L9,57 L14,62 L9,67 L9,64 L3,64Z" fill="#4f80cc"/><rect x="0" y="66" width="5" height="1" fill="#333"/></svg><div class="a" style="left:1704px;top:65px;width:1px;height:62px;background:#a9bfdc"></div><div class="a" style="left:1708px;top:65px;font-size:12.5px;color:#15428b">A</div><div class="a" style="left:1710px;top:88px;width:12px;height:12px;border:1px solid #7f98bb;background:#f4f7fc"></div><div class="a" style="left:1710px;top:113px;width:12px;height:12px;border:1px solid #7f98bb;background:#f4f7fc"></div><div class="a" style="left:0;top:193px;width:80px;height:205px;background:#fff;box-shadow:1px 2px 3px rgba(20,40,80,0.55)"></div><div class="a" style="left:0;top:193px;width:80px;height:205px;background:repeating-linear-gradient(90deg,#fff 0 4px,#f6f6f8 4px 5px)"></div><div class="a" style="left:0;top:236px;width:76px;height:4px;background:#eeb0a0"></div><div class="a" style="left:0;top:240px;width:76px;height:42px;background:#d64b17"></div><div class="a" style="left:0;top:282px;width:76px;height:3px;background:#a8705e"></div><svg class="a" style="left:0;top:193px" width="80" height="205"><path d="M-10,4.5 L66,4.5 A10,10 0 0 1 76.5,14.5 L76.5,191 A10,10 0 0 1 66,201.5 L-10,201.5" fill="none" stroke="#111" stroke-width="1.3"/></svg><div class="a" style="left:0;top:415px;width:80px;height:205px;background:#fbfbfb;box-shadow:1px 2px 3px rgba(20,40,80,0.55)"></div><div class="a" style="left:0;top:415px;width:80px;height:35px;background:linear-gradient(90deg,#e2e2e4,#ececee 60%,#f6f6f6)"></div><svg class="a" style="left:0;top:415px" width="80" height="205"><path d="M0,44 Q10,40 22,38 Q30,30 40,36 Q52,30 58,38 Q64,28 72,34 Q80,30 80,40 M56,52 Q60,45 70,48 Q78,44 80,52 M40,58 Q48,66 60,60 Q70,68 80,62 M0,70 Q20,76 40,72 Q48,82 60,76 M64,90 Q72,86 80,94 M66,100 Q72,120 68,140 Q74,160 80,150 M40,180 Q52,170 60,190 Q66,200 62,205 M50,170 Q62,160 76,176 M60,195 Q70,188 80,198 M20,12 Q40,20 60,8" fill="none" stroke="#a8a8a8" stroke-width="0.7"/><text x="-2" y="54" font-family="Liberation Sans" font-size="11" font-weight="bold" fill="#3a3a3a" textLength="33" lengthAdjust="spacingAndGlyphs">station</text><g font-family="Liberation Serif" font-size="6.5" fill="#8a8a8a"><text x="2" y="83" textLength="53" lengthAdjust="spacingAndGlyphs">the many animals that</text><text x="0" y="104" textLength="30" lengthAdjust="spacingAndGlyphs">forest plants.</text><text x="0" y="125" textLength="56" lengthAdjust="spacingAndGlyphs">ns of plants and animals</text><text x="0" y="146" textLength="54" lengthAdjust="spacingAndGlyphs">rainforest in the world.</text><text x="0" y="168">s</text><text x="0" y="191" textLength="42" lengthAdjust="spacingAndGlyphs">rld's land surface.</text></g></svg><div class="a" style="left:0;top:636px;width:80px;height:205px;background:#fff;box-shadow:1px 2px 3px rgba(20,40,80,0.55)"></div><svg class="a" style="left:0;top:636px" width="80" height="205"><path d="M-10,4.5 L66,4.5 A10,10 0 0 1 76.5,14.5 L76.5,42 M76.5,162 L76.5,190 A10,10 0 0 1 66,200.5 L-10,200.5" fill="none" stroke="#111" stroke-width="1.3"/><g font-family="Liberation Serif" font-size="6.5" fill="#8a8a8a"><text x="0" y="83" textLength="73" lengthAdjust="spacingAndGlyphs">imals that live in their natural</text><text x="0" y="122" textLength="38" lengthAdjust="spacingAndGlyphs">treat an illness.</text></g><rect x="0" y="106" width="77" height="0.8" fill="#d0d0d0"/><rect x="0" y="130" width="77" height="0.8" fill="#d0d0d0"/></svg><div class="a" style="left:-4px;top:851px;width:90px;height:218px;background:linear-gradient(90deg,#f0c86a,#f5d58a 50%,#e9b75a);"></div><div class="a" style="left:0;top:858px;width:80px;height:204px;background:#fff;box-shadow:1px 1px 1px rgba(60,40,0,0.6)"></div><div class="a" style="left:0;top:858px;width:80px;height:204px;overflow:hidden"><svg class="a" style="left:0;top:0" width="80" height="204"><path d="M-10,2 L68,2 A9,9 0 0 1 78,11 L78,30 M78,190 L78,191 A9,9 0 0 1 68,201 L-10,201" fill="none" stroke="#111" stroke-width="1.2"/></svg><div class="a" style="left:0;top:29.4px;width:80px;height:133.4px;background:#fdfdfd"></div><svg class="a" style="left:0;top:0" width="80" height="204"><path d="M78,163 L78,190 A9,9 0 0 1 68,200.5 L-10,200.5" fill="none" stroke="#111" stroke-width="1.2"/><polygon points="58.9,29.4 80,29.4 80,42.0 76.3,42.0 64.8,36.3" fill="#dcdce2"/><ellipse cx="69.2" cy="41.6" rx="6.4" ry="8.7" fill="#eceef4"/><ellipse cx="74.5" cy="52.3" rx="5.1" ry="6.7" fill="#e3e5ec"/></svg><div class="a" style="left:-181.5px;top:50.1px;width:229.6px;height:14.2px;background:#e4e4e7"></div><div class="a" style="left:-41.2px;top:56.0px;width:1.6px;height:1.6px;border-radius:50%;background:#444"></div><div class="t" style="left:-38.7px;top:51.76px;font-size:7.5px;font-family:'Liberation Sans', sans-serif;color:#444;transform:scaleX(0.6740);">oxygen</div><div class="a" style="left:-14.6px;top:56.0px;width:1.6px;height:1.6px;border-radius:50%;background:#444"></div><div class="t" style="left:-12.1px;top:51.76px;font-size:7.5px;font-family:'Liberation Sans', sans-serif;color:#444;transform:scaleX(0.6726);">soil</div><div class="a" style="left:3.3px;top:56.0px;width:1.6px;height:1.6px;border-radius:50%;background:#444"></div><div class="t" style="left:5.8px;top:51.76px;font-size:7.5px;font-family:'Liberation Sans', sans-serif;color:#444;transform:scaleX(0.7202);">deforestation</div><div class="t" style="left:-72.5px;top:70.67px;font-size:8.3px;font-family:'Liberation Serif', serif;color:#666;transform:scaleX(0.7908);">. Many plant and animal</div><div class="t" style="left:32.0px;top:70.67px;font-size:8.3px;font-family:'Liberation Serif', serif;color:#666;transform:scaleX(0.7734);">are destroyed</div><div class="t" style="left:28.1px;top:82.15px;font-size:8.3px;font-family:'Liberation Serif', serif;color:#666;transform:scaleX(0.7657);">on Earth. The</div><div class="t" style="left:-12.3px;top:93.63px;font-size:8.3px;font-family:'Liberation Serif', serif;color:#666;transform:scaleX(0.7635);">. The roots absorb</div><div class="t" style="left:36.4px;top:105.11px;font-size:8.3px;font-family:'Liberation Serif', serif;color:#666;transform:scaleX(0.7864);">so mud</div><div class="t" style="left:-16.9px;top:132.66px;font-size:8.3px;font-family:'Liberation Serif', serif;color:#666;transform:scaleX(0.7894);">, and most deforestation in the</div><div class="a" style="left:-6.6px;top:79.2px;width:34.9px;height:0.6px;background:#aaa"></div><div class="a" style="left:-9.5px;top:90.5px;width:34.7px;height:0.6px;background:#aaa"></div><div class="a" style="left:-49.3px;top:102.2px;width:34.7px;height:0.6px;background:#aaa"></div><div class="a" style="left:-1.3px;top:113.2px;width:34.7px;height:0.6px;background:#aaa"></div><div class="a" style="left:-55.7px;top:141.0px;width:34.9px;height:0.6px;background:#aaa"></div><div class="t" style="left:-4.3px;top:69.52px;font-size:6.5px;font-family:'Liberation Serif', serif;font-weight:bold;color:#d02020;transform:scaleX(1.0145);">habitats</div><div class="t" style="left:-6.8px;top:82.26px;font-size:6.5px;font-family:'Liberation Serif', serif;font-weight:bold;color:#d02020;transform:scaleX(1.0836);">life</div><div class="t" style="left:2.4px;top:104.19px;font-size:6.5px;font-family:'Liberation Serif', serif;font-weight:bold;color:#d02020;transform:scaleX(0.9915);">soil;</div></div><div class="a" style="left:0;top:1079px;width:80px;height:66px;background:#fff;box-shadow:1px 2px 3px rgba(20,40,80,0.55)"></div><svg class="a" style="left:0;top:1079px" width="80" height="65"><path d="M-10,4.5 L66,4.5 A10,10 0 0 1 76.5,14.5 L76.5,28" fill="none" stroke="#111" stroke-width="1.3"/><rect x="0" y="45" width="60" height="22" fill="none" stroke="#ddd" stroke-width="0.8"/><g font-family="Liberation Serif" font-size="6.5" fill="#888"><text x="0" y="55" textLength="55" lengthAdjust="spacingAndGlyphs">e palm oil sustainably</text><text x="0" y="65" textLength="40" lengthAdjust="spacingAndGlyphs">ut the rainforest</text></g><rect x="0" y="53" width="55" height="0.6" fill="#999"/></svg><svg class="a" style="left:13.0px;top:1178.0px" width="28" height="28"><circle cx="14" cy="14" r="12.5" fill="#db4437"/><path d="M14,14 L3.2,20.2 A12.5,12.5 0 0 0 20.3,24.8 Z" fill="#0f9d58"/><path d="M14,14 L20.3,24.8 A12.5,12.5 0 0 0 26.5,14 L14,14Z" fill="#ffcd40"/><path d="M14,14 L26.5,14 A12.5,12.5 0 0 0 24.8,7.7Z" fill="#ffcd40"/><circle cx="14" cy="14" r="5.8" fill="#fff"/><circle cx="14" cy="14" r="4.6" fill="#4285f4"/></svg><svg class="a" style="left:68.0px;top:1178.0px" width="28" height="28"><path d="M5,9 L23,9 L24,25 L4,26 Z" fill="#fff"/><path d="M10,9 Q10,3 14,3 Q18,3 18,9" fill="none" stroke="#fff" stroke-width="1.6"/><rect x="8" y="13" width="5" height="4" fill="#222"/><rect x="14" y="13" width="5" height="4" fill="#222"/><rect x="8" y="18" width="5" height="4" fill="#222"/><rect x="14" y="18" width="5" height="4" fill="#222"/></svg><svg class="a" style="left:123.0px;top:1178.0px" width="28" height="28"><path d="M3,6 L11,6 L13,8 L25,8 L25,24 L3,24Z" fill="#f3d57a"/><rect x="3" y="10" width="22" height="14" fill="#f8e08e"/><path d="M8,25 L8,18 L20,18 L20,25 L17,25 L17,21 L11,21 L11,25Z" fill="#35a6e0"/></svg><svg class="a" style="left:178.0px;top:1178.0px" width="28" height="28"><path d="M2,10 L14,3 L26,10 L26,24 L2,24Z" fill="#fff"/><path d="M4,10 L22,13 L12,16 L24,22" fill="none" stroke="#222" stroke-width="2.2"/></svg><svg class="a" style="left:234.0px;top:1178.0px" width="28" height="28"><g transform="translate(14,14)"><circle r="8" fill="#fff"/><rect x="-2.5" y="-11" width="5" height="5" fill="#fff" transform="rotate(0)"/><rect x="-2.5" y="-11" width="5" height="5" fill="#fff" transform="rotate(45)"/><rect x="-2.5" y="-11" width="5" height="5" fill="#fff" transform="rotate(90)"/><rect x="-2.5" y="-11" width="5" height="5" fill="#fff" transform="rotate(135)"/><rect x="-2.5" y="-11" width="5" height="5" fill="#fff" transform="rotate(180)"/><rect x="-2.5" y="-11" width="5" height="5" fill="#fff" transform="rotate(225)"/><rect x="-2.5" y="-11" width="5" height="5" fill="#fff" transform="rotate(270)"/><rect x="-2.5" y="-11" width="5" height="5" fill="#fff" transform="rotate(315)"/><circle r="3.8" fill="#1d1a17"/></g></svg><svg class="a" style="left:288.0px;top:1178.0px" width="28" height="28"><rect x="5" y="2" width="18" height="25" fill="#fff"/><rect x="7" y="4" width="14" height="4" fill="#222"/><rect x="7" y="10.0" width="3" height="3" fill="#222"/><rect x="12" y="10.0" width="3" height="3" fill="#222"/><rect x="17" y="10.0" width="3" height="3" fill="#222"/><rect x="7" y="14.5" width="3" height="3" fill="#222"/><rect x="12" y="14.5" width="3" height="3" fill="#222"/><rect x="17" y="14.5" width="3" height="3" fill="#222"/><rect x="7" y="19.0" width="3" height="3" fill="#222"/><rect x="12" y="19.0" width="3" height="3" fill="#222"/><rect x="17" y="19.0" width="3" height="3" fill="#222"/><rect x="7" y="23.5" width="3" height="3" fill="#222"/><rect x="12" y="23.5" width="3" height="3" fill="#222"/><rect x="17" y="23.5" width="3" height="3" fill="#222"/></svg><svg class="a" style="left:343.0px;top:1178.0px" width="28" height="28"><rect x="4" y="3" width="22" height="23" rx="2" fill="#f4c3a8"/><rect x="2" y="6" width="24" height="19" rx="2" fill="#e06838"/><rect x="6" y="10" width="6" height="10" fill="#fff"/><circle cx="18" cy="15" r="4.5" fill="#fff"/><circle cx="18" cy="15" r="2.2" fill="#e06838"/></svg><svg class="a" style="left:398.0px;top:1178.0px" width="28" height="28"><rect x="8" y="3" width="18" height="23" fill="#eef3fb"/><rect x="2" y="5" width="16" height="17" fill="#2b5eb6"/><text x="3" y="19" font-family="Liberation Sans" font-weight="bold" font-size="13" fill="#fff">W</text><rect x="19" y="8" width="6" height="1.5" fill="#2b5eb6"/><rect x="19" y="12" width="6" height="1.5" fill="#2b5eb6"/><rect x="19" y="16" width="6" height="1.5" fill="#2b5eb6"/></svg><svg class="a" style="left:453.0px;top:1178.0px" width="28" height="28"><ellipse cx="13" cy="16" rx="11" ry="9" fill="#e8e4d4"/><circle cx="8" cy="13" r="2.2" fill="#e33"/><circle cx="13" cy="10" r="2.2" fill="#3a6"/><circle cx="18" cy="12" r="2.2" fill="#36c"/><circle cx="9" cy="19" r="2.2" fill="#fb3"/><path d="M18,20 L26,3 L28,4 L21,21Z" fill="#c88a3a"/></svg><svg class="a" style="left:509.0px;top:1178.0px" width="28" height="28"><rect x="3" y="3" width="22" height="23" fill="#dfe8f2"/><rect x="3" y="3" width="22" height="4" fill="#9fb2c8"/><rect x="8" y="11" width="10" height="10" fill="none" stroke="#6a7a90" stroke-dasharray="2,1.5"/><path d="M17,16 L22,23 L19,22 L18,25Z" fill="#fff" stroke="#333" stroke-width="0.6"/></svg><svg class="a" style="left:1691px;top:1186px" width="16" height="10"><path d="M2,8 L8,2 L14,8" fill="none" stroke="#fff" stroke-width="1.5"/></svg><div class="a" style="left:1713px;top:1187px;width:6px;height:10px;background:#fff"></div><div class="a" style="left:1636px;top:1147px;width:1px;height:21px;background:#99b3d6"></div><div class="a" style="left:1641px;top:1148px;width:62px;height:19px;border:1px solid #9ab2d4;background:linear-gradient(#e8f0fa,#cddff3);box-sizing:border-box"></div><svg class="a" style="left:1644px;top:1150px" width="70" height="16"><rect x="3" y="2" width="12" height="11" fill="#fff" stroke="#223" stroke-width="1.2"/><rect x="4" y="3" width="4" height="9" fill="#223"/><g fill="none" stroke="#223" stroke-width="1.1"><rect x="23" y="2.5" width="4" height="4"/><rect x="29" y="2.5" width="4" height="4"/><rect x="23" y="8.5" width="4" height="4"/><rect x="29" y="8.5" width="4" height="4"/></g><path d="M44,3 L56,3 M46,3 L46,8 L54,8 L54,3 M50,8 L50,13 M47,13 L53,13" fill="none" stroke="#223" stroke-width="1.2"/></svg><div class="a" style="left:1709px;top:1149px;font-size:13px;font-weight:bold;color:#15295a">1</div></body></html>
